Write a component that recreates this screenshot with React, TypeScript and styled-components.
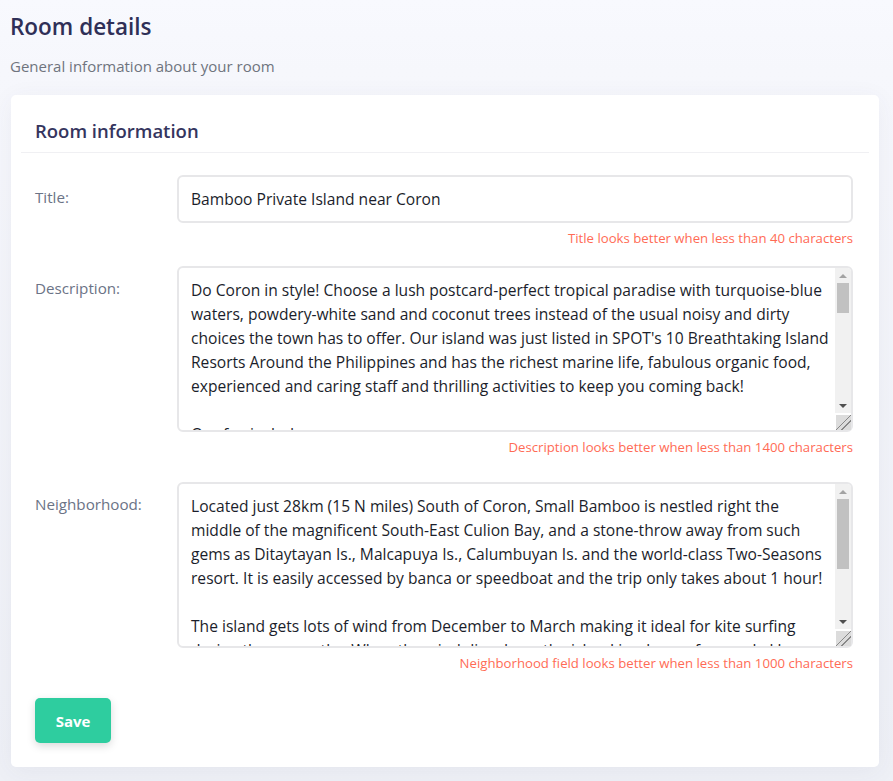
import React from "react";
import styled, { createGlobalStyle } from "styled-components";

const GlobalStyle = createGlobalStyle`
  html, body {
    margin: 0;
    padding: 0;
    background: #eef0f6;
  }
  body {
    font-family: "Open Sans", "Noto Sans", sans-serif;
    color: #1f2230;
  }
  * {
    box-sizing: border-box;
  }
`;

const Page = styled.div`
  min-height: 781px;
  background: linear-gradient(180deg, #f8f9fe 0%, #f6f7fc 70px, #eef0f6 100%);
  padding-bottom: 14px;
`;

const Header = styled.header`
  padding: 11px 10px 18px;
`;

const PageTitle = styled.h1`
  margin: 0;
  font-size: 22.5px;
  line-height: 32px;
  font-weight: 600;
  color: #2f2f57;
`;

const PageSubtitle = styled.p`
  margin: 12px 0 0;
  font-size: 15px;
  line-height: 22px;
  color: #6f747e;
`;

const Card = styled.section`
  margin: 0 14px 0 11px;
  background: #fff;
  border-radius: 5px;
  box-shadow: 0 4px 24px rgba(60, 70, 110, 0.06);
  padding: 0 0 24px;
`;

const CardHeader = styled.div`
  margin: 0 10px;
  padding: 22px 14px 8px;
  border-bottom: 1px solid #f0f0f3;
`;

const CardTitle = styled.h2`
  margin: 0;
  font-size: 18.5px;
  line-height: 27px;
  font-weight: 600;
  color: #35355e;
`;

const Form = styled.form`
  padding: 22px 26px 0 24px;
  display: flex;
  flex-direction: column;
`;

const Row = styled.div<{ $after: number }>`
  display: grid;
  grid-template-columns: 142px 1fr;
  margin-bottom: ${(p) => p.$after}px;
`;

const Label = styled.label`
  padding-top: 11px;
  font-size: 15.2px;
  line-height: 22px;
  color: #6b7386;
`;

const Field = styled.div`
  display: flex;
  flex-direction: column;
`;

const fieldBase = `
  display: block;
  width: 100%;
  border: 2px solid #e7e7e9;
  border-radius: 6px;
  background: #fff;
  font-family: "Open Sans", "Noto Sans", sans-serif;
  font-size: 15.6px;
  color: #1b1e2b;
  outline: none;
`;

const TextInput = styled.input`
  ${fieldBase}
  height: 48px;
  padding: 0 12px;
`;

const AreaWrap = styled.div`
  position: relative;
`;

const TextArea = styled.textarea`
  ${fieldBase}
  height: 166px;
  padding: 10px 21px 10px 12px;
  line-height: 24px;
  resize: vertical;
  white-space: pre-wrap;
  overflow: hidden;

  &::-webkit-resizer {
    background-color: #dcdcdc;
    background-image: linear-gradient(
      135deg,
      transparent 0 10px,
      #888 10px 11px,
      transparent 11px 14px,
      #888 14px 15px,
      transparent 15px
    );
  }
`;

/* drawn scrollbar, sits over the textarea's right edge */
const Scrollbar = styled.div`
  position: absolute;
  top: 2px;
  right: 2px;
  bottom: 19px;
  width: 16px;
  background: #f1f1f1;
  border-top-right-radius: 4px;
  display: flex;
  flex-direction: column;
  pointer-events: none;
`;

const Arrow = styled.div<{ $down?: boolean }>`
  height: 15px;
  flex: none;
  display: flex;
  align-items: center;
  justify-content: center;

  &::before {
    content: "";
    border-left: 4px solid transparent;
    border-right: 4px solid transparent;
    ${(p) =>
      p.$down
        ? "border-top: 4px solid #505050;"
        : "border-bottom: 4px solid #a3a3a3;"}
  }
`;

const Track = styled.div`
  flex: 1;
  padding: 0 2px;
`;

const Thumb = styled.div`
  background: #c1c1c1;
`;

const Hint = styled.div`
  margin-top: 6px;
  text-align: right;
  font-size: 13.2px;
  line-height: 18px;
  color: #ff6b55;
`;

const Actions = styled.div`
  display: flex;
`;

const SaveButton = styled.button`
  width: 76px;
  height: 45px;
  border: none;
  border-radius: 5px;
  background: #2ecd9f;
  color: #fff;
  font-family: "Open Sans", "Noto Sans", sans-serif;
  font-weight: 700;
  font-size: 15px;
  box-shadow: 0 3px 8px rgba(0, 0, 0, 0.15);
  cursor: pointer;
`;

const description = `Do Coron in style! Choose a lush postcard-perfect tropical paradise with turquoise-blue
waters, powdery-white sand and coconut trees instead of the usual noisy and dirty
choices the town has to offer. Our island was just listed in SPOT's 10 Breathtaking Island
Resorts Around the Philippines and has the richest marine life, fabulous organic food,
experienced and caring staff and thrilling activities to keep you coming back!

Our fee includes:
- Accommodation in a native bamboo cottage right on the beach
- Three freshly cooked meals a day, snacks, coffee, tea and drinking water
- Use of kayaks, paddle boards and snorkeling gear
- Island hopping tour to the nearby sandbars and coral gardens
- Round trip boat transfer from Coron town

Life on the island is simple and slow. There is no road, no traffic and no noise, only the sound of the waves and the wind in the bamboo. Electricity comes from solar panels and is available in the evening.

Please let us know in advance about any special dietary needs so that we can prepare for your arrival.`;

const neighborhood = `Located just 28km (15 N miles) South of Coron, Small Bamboo is nestled right the
middle of the magnificent South-East Culion Bay, and a stone-throw away from such
gems as Ditaytayan Is., Malcapuya Is., Calumbuyan Is. and the world-class Two-Seasons
resort. It is easily accessed by banca or speedboat and the trip only takes about 1 hour!

The island gets lots of wind from December to March making it ideal for kite surfing
during those months. When the wind dies down the island is a haven for snorkel lovers and divers alike, with several wrecks and reefs within a short boat ride.`;

const fields = [
  {
    id: "title",
    label: "Title:",
    value: "Bamboo Private Island near Coron",
    hint: "Title looks better when less than 40 characters",
    thumb: 0,
    after: 19,
  },
  {
    id: "description",
    label: "Description:",
    value: description,
    hint: "Description looks better when less than 1400 characters",
    thumb: 30,
    after: 26,
  },
  {
    id: "neighborhood",
    label: "Neighborhood:",
    value: neighborhood,
    hint: "Neighborhood field looks better when less than 1000 characters",
    thumb: 70,
    after: 26,
  },
];

export default function App() {
  return (
    <Page>
      <GlobalStyle />
      <Header>
        <PageTitle>Room details</PageTitle>
        <PageSubtitle>General information about your room</PageSubtitle>
      </Header>
      <Card>
        <CardHeader>
          <CardTitle>Room information</CardTitle>
        </CardHeader>
        <Form onSubmit={(e) => e.preventDefault()}>
          {fields.map((f) => (
            <Row key={f.id} $after={f.after}>
              <Label htmlFor={f.id}>{f.label}</Label>
              <Field>
                {f.thumb ? (
                  <AreaWrap>
                    <TextArea id={f.id} defaultValue={f.value} />
                    <Scrollbar>
                      <Arrow />
                      <Track>
                        <Thumb style={{ height: f.thumb }} />
                      </Track>
                      <Arrow $down />
                    </Scrollbar>
                  </AreaWrap>
                ) : (
                  <TextInput id={f.id} defaultValue={f.value} />
                )}
                <Hint>{f.hint}</Hint>
              </Field>
            </Row>
          ))}
          <Actions>
            <SaveButton type="submit">Save</SaveButton>
          </Actions>
        </Form>
      </Card>
    </Page>
  );
}
